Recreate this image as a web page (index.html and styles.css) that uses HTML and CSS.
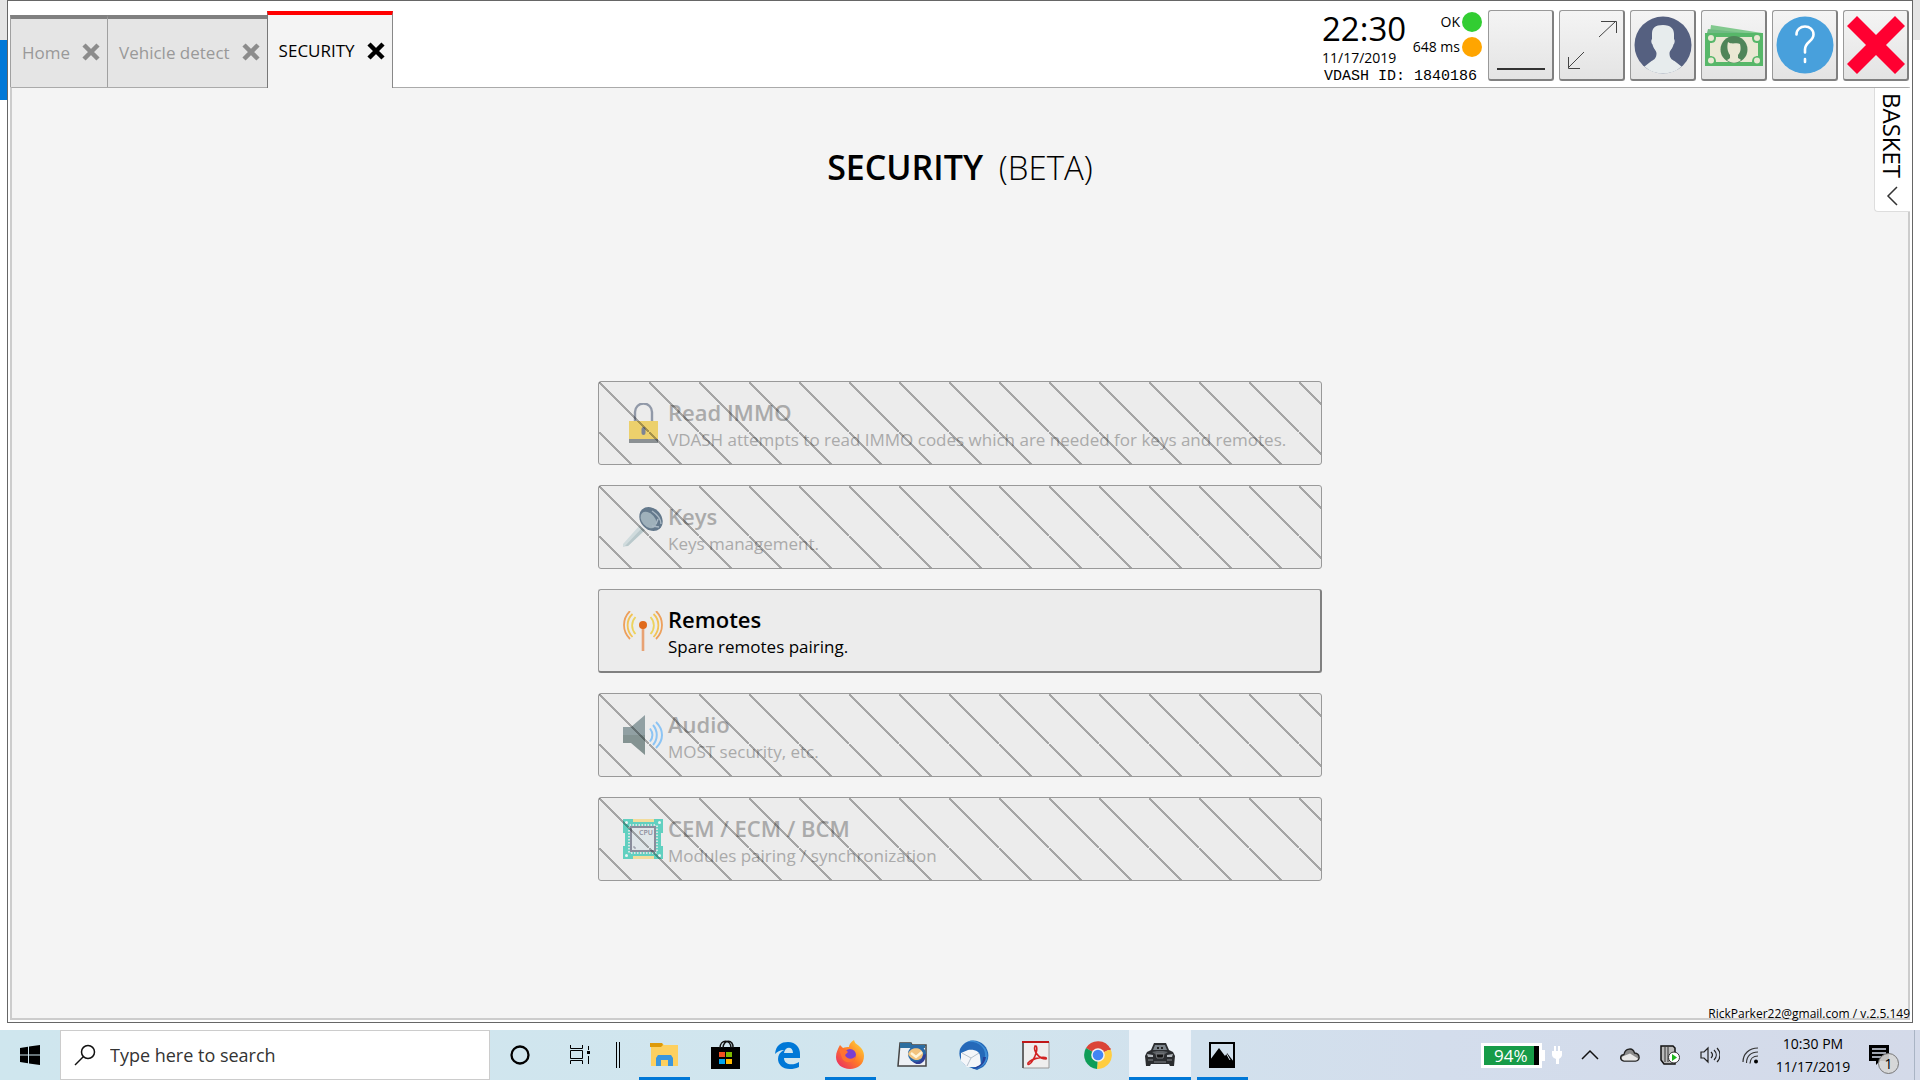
FILE: index.html
```html
<!DOCTYPE html>
<html lang="en">
<head>
<meta charset="utf-8">
<title>VDASH - Security</title>
<link rel="stylesheet" href="styles.css">
</head>
<body>
<div class="desktop">
  <div class="window">
    <header class="header">
      <nav class="tabs">
        <div class="tab"><a href="#home">Home</a><button class="tab-close" aria-label="Close Home"><svg width="18" height="18" viewBox="0 0 18 18"><path d="M2 2L16 16M16 2L2 16" stroke="currentColor" stroke-width="4.5"/></svg></button></div>
        <div class="tab"><a href="#vehicle">Vehicle detect</a><button class="tab-close" aria-label="Close Vehicle detect"><svg width="18" height="18" viewBox="0 0 18 18"><path d="M2 2L16 16M16 2L2 16" stroke="currentColor" stroke-width="4.5"/></svg></button></div>
        <div class="tab tab-active"><a href="#security">SECURITY</a><button class="tab-close" aria-label="Close SECURITY"><svg width="18" height="18" viewBox="0 0 18 18"><path d="M2 2L16 16M16 2L2 16" stroke="currentColor" stroke-width="4.5"/></svg></button></div>
      </nav>
      <div class="info">
        <div class="clock"><div class="clock-time">22:30</div><div class="clock-date">11/17/2019</div></div>
        <div class="status">
          <div class="status-row">OK<span class="dot dot-green"></span></div>
          <div class="status-row">648 ms<span class="dot dot-orange"></span></div>
        </div>
        <div class="vdash-id">VDASH ID: 1840186</div>
      </div>
      <div class="tools">
        <button class="tool" aria-label="Minimize"><svg width="58" height="58" viewBox="0 0 58 58"><path d="M5 53H53" stroke="#333" stroke-width="2"/></svg></button>
        <button class="tool" aria-label="Resize"><svg width="58" height="58" viewBox="0 0 58 58"><g fill="none" stroke="#444" stroke-width="1"><path d="M36 21L53 5M38 5.500H53.500V17M21 36L5 52M5.500 41V52.500H17"/></g></svg></button>
        <button class="tool" aria-label="Profile"><svg width="58" height="58" viewBox="0 0 58 58"><circle cx="29" cy="29" r="28.500" fill="#556080"/><path d="M29 9c8 0 11 4 11 9v5c1 1 1 4-.5 5.500C38.500 33 36 34 35.500 37c0 5 2 6.500 5 8l7 5.500C43 55 36 57.500 29 57.500S15 55 10.500 50.500l7-5.500c3-1.500 5-3 5-8C22 34 19.500 33 18.500 28.500 17 27 17 24 18 23v-5c0-6 3-9 11-9z" fill="#e7eced"/></svg></button>
        <button class="tool" aria-label="Payments"><svg width="58" height="58" viewBox="0 0 58 58"><path d="M6 9L57 17H5z" fill="#82c98e"/><path d="M3 13L40 17H2z" fill="#6fbb82"/><path d="M0 17H58V50H0z" fill="#57b769"/><path d="M11 21H47c0 5 2 6 6 6V40c-4 0-6 2-6 6H11c0-4-2-6-6-6V27c4 0 6-1 6-6z" fill="#eae8d3"/><g fill="#eae8d3"><circle cx="6" cy="22" r="3"/><circle cx="52" cy="22" r="3"/><circle cx="6" cy="44.500" r="3"/><circle cx="52" cy="44.500" r="3"/></g><circle cx="29" cy="33.500" r="13.500" fill="#4f8559"/><path d="M23 26c4 3 9 0 12 2 1 4 1 8-2 11v3c2 1 3 2 3 2-4 3.500-10 3.500-14 0 0 0 2-1 3-2v-3c-3-4-3-9-2-13z" fill="#eae8d3"/></svg></button>
        <button class="tool" aria-label="Help"><svg width="58" height="58" viewBox="0 0 58 58"><circle cx="29" cy="29" r="28.500" fill="#48a0dc"/><path d="M20.500 18.500c0-5 4-8 8.500-8s8.500 3 8.500 8c0 7-8.500 7-8.500 15v3M29 43v3" fill="none" stroke="#fff" stroke-width="2.600" stroke-linecap="round"/></svg></button>
        <button class="tool" aria-label="Exit"><svg width="58" height="58" viewBox="0 0 58 58"><path d="M10 0L29 19L48 0L58 10L39 29L58 48L48 58L29 39L10 58L0 48L19 29L0 10z" fill="#ff0031"/></svg></button>
      </div>
    </header>
    <main class="panel">
      <button class="basket"><span>BASKET</span><svg width="12" height="20" viewBox="0 0 12 20"><path d="M11 1L2 10L11 19" fill="none" stroke="#333" stroke-width="1.500"/></svg></button>
      <h1 class="title">SECURITY <span>(BETA)</span></h1>
      <div class="list">
        <button class="card card-off" disabled>
          <svg width="40" height="40" viewBox="0 0 40 40"><path d="M12 20V9a8 8 0 0 1 17 0V20" fill="none" stroke="#9199a8" stroke-width="2.400"/><path d="M6 18H35V36H6z" fill="#ecd06c"/><path d="M6 36H35V40H6z" fill="#8b9093"/><path d="M20.500 26V30" stroke="#7d8494" stroke-width="4" stroke-linecap="round"/></svg>
          <span class="card-text"><strong>Read IMMO</strong><span>VDASH attempts to read IMMO codes which are needed for keys and remotes.</span></span>
        </button>
        <button class="card card-off" disabled>
          <svg width="40" height="40" viewBox="0 0 40 40"><path d="M0 37L17 18L22 23L5 39L0 40z" fill="#d0dbdd"/><path d="M2 39L19 21L22 23L5 39z" fill="#b9c8cb"/><ellipse cx="28" cy="12" rx="13" ry="10.500" transform="rotate(48 28 12)" fill="#64798c"/><ellipse cx="25.500" cy="13" rx="9.500" ry="6.500" transform="rotate(48 25.500 13)" fill="#9fb1bb"/><path d="M29 4C35 8 38 13 38 17M33 17l2-5M29 19l7 1" stroke="#a9b8c4" fill="none" stroke-width="1.500"/></svg>
          <span class="card-text"><strong>Keys</strong><span>Keys management.</span></span>
        </button>
        <button class="card">
          <svg width="40" height="40" viewBox="0 0 40 40"><path d="M20 14V40" stroke="#e8a273" stroke-width="2.600"/><circle cx="20" cy="14" r="4" fill="#e06a1c"/><g fill="none" stroke-width="1.800"><path d="M7 0C-1 8-1 20 7 28M33 0C41 8 41 20 33 28" stroke="#eda05c"/><path d="M9.500 3C3 9 3 19 9.500 26M30.500 3C37 9 37 19 30.500 26" stroke="#f2c355"/><path d="M12.500 6C8 11 8 18 12.500 23M27.500 6C32 11 32 18 27.500 23" stroke="#ecd35e"/></g></svg>
          <span class="card-text"><strong>Remotes</strong><span>Spare remotes pairing.</span></span>
        </button>
        <button class="card card-off" disabled>
          <svg width="40" height="40" viewBox="0 0 40 40"><path d="M0 12H8L22 0V20H0z" fill="#91a0a3"/><path d="M0 20H22V40L8 28H0z" fill="#849392"/><g fill="none" stroke-width="2"><path d="M27 13.500c3 4 3 9 0 13M30 10c5 6 5 14 0 20M33 7c8 8 8 18 0 26" stroke="#8cc4f4"/></g></svg>
          <span class="card-text"><strong>Audio</strong><span>MOST security, etc.</span></span>
        </button>
        <button class="card card-off" disabled>
          <svg width="40" height="40" viewBox="0 0 40 40"><path d="M0 0H40V14H38V27H40V40H0V27H2V14H0z" fill="#61d0c0"/><path d="M10 0H31V3H10zM10 37H31V40H10z" fill="#f2dc9b"/><rect x="6.500" y="6.500" width="27" height="27" fill="none" stroke="#d5e4e3" stroke-width="3" stroke-dasharray="1.500 1.500"/><rect x="8" y="8" width="24" height="24" fill="#dfe6e9" stroke="#8a8d9c" stroke-width="2"/><g fill="#eef4f3"><circle cx="3.500" cy="3.500" r="1.500"/><circle cx="36.500" cy="3.500" r="1.500"/><circle cx="3.500" cy="36.500" r="1.500"/><circle cx="36.500" cy="36.500" r="1.500"/></g><text x="16" y="16" class="chip-label">CPU</text><path d="M11 27v2h2" stroke="#8a8d9c" fill="none"/></svg>
          <span class="card-text"><strong>CEM / ECM / BCM</strong><span>Modules pairing / synchronization</span></span>
        </button>
      </div>
      <div class="account">RickParker22@gmail.com / v.2.5.149</div>
    </main>
  </div>
</div>
<footer class="taskbar">
  <button class="start" aria-label="Start"><svg width="20" height="20" viewBox="0 0 20 20"><path d="M0 3L8 1.800V9.500H0zM9 1.600L20 0V9.500H9zM0 10.500H8V18.200L0 17zM9 10.500H20V20L9 18.400z"/></svg></button>
  <label class="search"><svg width="22" height="22" viewBox="0 0 22 22"><g fill="none" stroke="#111" stroke-width="1.500"><circle cx="14" cy="8" r="6.500"/><path d="M9.500 12.500L1 21"/></g></svg><input type="text" placeholder="Type here to search" aria-label="Search"></label>
  <button class="sys" aria-label="Cortana"><svg width="20" height="20" viewBox="0 0 20 20"><circle cx="10" cy="10" r="8.500" fill="none" stroke="#000" stroke-width="2.300"/></svg></button>
  <button class="sys" aria-label="Task view"><svg width="20" height="20" viewBox="0 0 20 20"><path d="M.5 0V3.500H12.500V0M.5 19V15.500H12.500V19M.5 5.500H12.500V13.500H.5zM18.500 1V5M18.500 11V19" fill="none" stroke="#000"/><path d="M17 6h3v3h-3z"/></svg></button>
  <span class="grip"></span>
  <div class="apps">
    <button class="app app-open" aria-label="File Explorer"><svg width="30" height="30" viewBox="0 0 30 30"><path d="M2 3H13L15 5H29V26H2z" fill="#fdd05f"/><path d="M1 3H13L14 5L12 7H1z" fill="#dd9a0a"/><path d="M7 26V18L9 15H22L24 18V26H19V20H12V26z" fill="#3a96dd"/></svg></button>
    <button class="app" aria-label="Microsoft Store"><svg width="30" height="30" viewBox="0 0 30 30"><path d="M0 7H29V29H0z"/><path d="M9 8C9-1 20-1 20 8M12 8C12-1 23-1 22 8" fill="none" stroke="#111" stroke-width="1.500"/><path d="M8 12h6v5H8z" fill="#f25022"/><path d="M15 12h6v5h-6z" fill="#7fba00"/><path d="M8 19h6v5H8z" fill="#00a4ef"/><path d="M15 19h6v5h-6z" fill="#ffb900"/></svg></button>
    <button class="app" aria-label="Edge"><svg width="30" height="30" viewBox="0 0 30 30"><path d="M2 14C3 5 8 2 15 2c8 0 12 6 12 12v4H11c0 7 9 8 15 4v5c-3 1.500-6 2-9 2C9 29 5 24 5 19c0-4 2-7 6-9-4 0-7 2-9 4zM11 13h9c0-7-8-7-9 0z" fill="#0078d7" fill-rule="evenodd"/></svg></button>
    <button class="app app-open" aria-label="Firefox"><svg width="30" height="30" viewBox="0 0 30 30"><defs><linearGradient id="fx" x1="1" y1="0" x2="0" y2="1"><stop offset="0" stop-color="#ffe53b"/><stop offset=".5" stop-color="#ff7a27"/><stop offset="1" stop-color="#e6216e"/></linearGradient></defs><path d="M5 5l3 3c2-1 4-1 6-1 0-3 2-5 5-7 1 4 3 4 5 6 4 3 5 7 5 10 0 8-6 13-14 13S1 24 1 17C1 12 3 9 5 5z" fill="url(#fx)"/><circle cx="15" cy="15" r="6" fill="#7a3fd0"/><path d="M4 9c4-1 7 0 9 3l-3 3c2 5 9 5 11 0-1 9-12 9-14 3z" fill="#ff7230"/></svg></button>
    <button class="app" aria-label="Mail profile"><svg width="30" height="30" viewBox="0 0 30 30"><path d="M3 3H14L15 5H29V26H1z" fill="#eef1f5" stroke="#444" stroke-width="1.500"/><path d="M3 3H14L15 5H28V8H3z" fill="#2d6f9f"/><circle cx="20" cy="14" r="9" fill="#2a6aa8"/><path d="M11 14c3-8 14-7 15 0 0 7-10 9-15 0z" fill="#f2c37e"/><path d="M14 13l5 4 6-5" fill="none" stroke="#fff5d9" stroke-width="2.500"/><path d="M29 14c0 10-9 13-14 7 6 2 10 0 11-6z" fill="#2f3f96"/></svg></button>
    <button class="app" aria-label="Thunderbird"><svg width="30" height="30" viewBox="0 0 30 30"><path d="M1 9C6-1 18-2 25 5c6 6 6 16-1 22l-6 3-8-3C2 24-1 16 1 9z" fill="#2569b9"/><path d="M8 2c10-2 19 5 18 14-1 6-5 10-9 12 11-1 15-13 8-21C19 0 12-1 8 2z" fill="#3f8ed6"/><path d="M2 13L9 10c7-1 12 2 12 6l1 9-5 2-9 0-6-6z" fill="#f4f6f9"/><path d="M3 13l9 5 8-5M8 26l4-8" fill="none" stroke="#b4bfca"/><path d="M27 17c-1 8-8 12-14 12l6-3c4-2 5-5 5-9z" fill="#27439b"/></svg></button>
    <button class="app" aria-label="Acrobat Reader"><svg width="30" height="30" viewBox="0 0 30 30"><path d="M2 2H28V28H2z" fill="#eee" stroke="#999"/><path d="M1 3V28H3V3z" fill="#666"/><path d="M1 1H28V3H1z" fill="#c01818"/><path d="M14 6c-2 5 4 13 11 13 3-3-13-2-18 4-1 3 3 1 5-3 3-5 5-12 3-14z" fill="none" stroke="#d22323" stroke-width="1.600"/></svg></button>
    <button class="app" aria-label="Chrome"><svg width="30" height="30" viewBox="0 0 30 30"><path d="M15 15L3 8A14 14 0 0 1 27.500 9z" fill="#db4437"/><path d="M15 15L27.500 9A14 14 0 0 1 14 29z" fill="#ffcd40"/><path d="M15 15L14 29A14 14 0 0 1 3 8z" fill="#0f9d58"/><path d="M15 8H27.500V10H15z" fill="#db4437"/><circle cx="15" cy="15" r="6.800" fill="#f1f1f1"/><circle cx="15" cy="15" r="5.300" fill="#4285f4"/></svg></button>
    <button class="app app-current" aria-label="VDASH"><svg width="30" height="30" viewBox="0 0 30 30"><path d="M9 3H21L24 10L28 12L30 16L29 26H25L24 24H6L5 26H1L0 16L2 12L6 10z" fill="#2b2d30"/><path d="M10 5H20L22 10H8z" fill="#7b838b"/><path d="M12 7h2v2h-2zM16 7h2v2h-2z" fill="#222"/><path d="M7 12L12 11H18L23 12L20 14H10z" fill="#5d6165"/><path d="M11 14H19L18 18H12z" fill="#111" stroke="#8c8e92" stroke-width=".8"/><path d="M2 14L8 15V17H3zM28 14L22 15V17H27z" fill="#b4b9be"/><path d="M3 20H8M22 20H27M9 22H21" stroke="#85888c"/></svg></button>
    <button class="app app-open" aria-label="Photos"><svg width="30" height="30" viewBox="0 0 30 30"><path d="M3 3H27V27H3z" fill="none" stroke="#000" stroke-width="2"/><path d="M3 20L12 8L18 16L20 13L27 22V28H3z"/><path d="M19 13l4 7" stroke="#d3dfe9"/></svg></button>
  </div>
  <div class="tray">
    <span class="battery">94%</span>
    <svg class="plug" width="10" height="18" viewBox="0 0 10 18"><path d="M2 0h2v5h2V0h2v5h2v4c0 2-2 3-3 4v5H4v-5C2 12 0 11 0 9V5h2z" fill="#fff"/></svg>
    <svg width="20" height="20" viewBox="0 0 20 20"><path d="M2 14L10 6L18 14" fill="none" stroke="#111" stroke-width="1.500"/></svg>
    <svg width="20" height="20" viewBox="0 0 20 20"><path d="M4 16c-5-1-4-6 0-6.500C5 3 13 2 14.500 8c6 .5 6 8 1 8z" fill="#8c8c8c" stroke="#222" stroke-width="1.300"/><path d="M4 15.500c-3-1-3-4 1-5l5-2 8 5c-1 2-2 2-4 2z" fill="#e8e8e8"/></svg>
    <svg width="20" height="20" viewBox="0 0 20 20"><path d="M1 1H13L15 3V19H4L1 15z" fill="#bbb" stroke="#111" stroke-width="1.500"/><path d="M5 2V17M8 2V17" stroke="#333"/><circle cx="14" cy="12.500" r="5.500" fill="#fff" stroke="#333"/><path d="M12 9l5 3.500-5 3.500z" fill="#1cb51c"/></svg>
    <svg width="20" height="20" viewBox="0 0 20 20"><path d="M1 7H4L8 3V17L4 13H1zM11 7c2 2 2 4 0 6M14 5c3 3 3 7 0 10M17 3c4 4 4 10 0 14" fill="none" stroke="#222" stroke-width="1.200"/></svg>
    <svg width="20" height="20" viewBox="0 0 20 20"><g fill="none" stroke="#333" stroke-width="1.200"><path d="M3 17C3 9 9 3 18 3M6.500 18C6.500 11 11 7 18 7M10 18.500C10 14 13 11 18 11"/></g><circle cx="16" cy="16.500" r="2"/></svg>
    <div class="tray-clock"><span>10:30 PM</span><span>11/17/2019</span></div>
    <div class="notice"><svg width="20" height="20" viewBox="0 0 20 20"><path d="M0 0H20V16H11L7 20V16H0z"/><path d="M3 4H17M3 8H17M3 12H12" stroke="#d4dcea" stroke-width="1.300"/></svg><span class="badge">1</span></div>
  </div>
</footer>
</body>
</html>
```
FILE: styles.css
```css
* { box-sizing: border-box; }

body {
  margin: 0;
  min-height: 100vh;
  display: flex;
  flex-direction: column;
  background: #fff;
  color: #000;
  font-family: "Open Sans", "Noto Sans", sans-serif;
  font-size: 17px;
}

button {
  margin: 0;
  padding: 0;
  border: 0;
  background: none;
  color: inherit;
  font: inherit;
}

svg { display: block; flex: none; }

/* Desktop area and the application window */
.desktop {
  flex: 1;
  display: flex;
  padding: 0 7px 7px;
  background:
    linear-gradient(#e5e5e5 40px, #0078d7 40px 100px, #fff 100px) left / 7px 100% no-repeat,
    linear-gradient(#e5e5e5 40px, #fff 40px) right / 7px 100% no-repeat;
}

.window {
  flex: 1;
  display: flex;
  flex-direction: column;
  padding: 0 2px 2px;
  border: 1px solid #666;
  background: #fff;
}

.header {
  display: flex;
  align-items: flex-end;
  height: 86px;
}

.tabs {
  flex: 1;
  display: flex;
  align-items: flex-end;
}

.tab {
  display: flex;
  align-items: center;
  gap: 12px;
  height: 72px;
  padding: 0 7px 2px 11px;
  border-top: 4px solid #808080;
  border-left: 1px solid #a0a0a0;
  background: #e5e5e5;
  color: #999;
}

.tab a { color: inherit; text-decoration: none; }

.tab-close { color: #8c8c8c; }

.tab-active {
  height: 77px;
  margin-bottom: -1px;
  border-top-color: #f00;
  border-left-color: #777;
  border-right: 1px solid #888;
  background: #f4f4f4;
  color: #000;
  z-index: 1;
}

.tab-active .tab-close { color: #000; }

.info {
  display: grid;
  grid-template-columns: auto 1fr;
  width: 160px;
  height: 78px;
  margin-right: 6px;
  font-size: 14px;
}

.clock-time {
  font-size: 33px;
  line-height: 40px;
}

.clock-date { line-height: 17px; }

.status-row {
  display: flex;
  align-items: center;
  justify-content: flex-end;
  gap: 2px;
  height: 25px;
}

.dot {
  width: 20px;
  height: 20px;
  border-radius: 50%;
}

.dot-green { background: #32cd32; }
.dot-orange { background: #ffa500; }

.vdash-id {
  grid-column: 1 / -1;
  padding-left: 2px;
  font-family: "Liberation Mono", monospace;
  font-size: 15px;
  line-height: 20px;
}

.tools {
  display: flex;
  gap: 5px;
  padding: 0 1px 6px 0;
}

.tool {
  display: flex;
  align-items: center;
  justify-content: center;
  width: 66px;
  height: 71px;
  border: 1px solid #999;
  border-right: 2px solid #808080;
  border-bottom: 2px solid #808080;
  border-radius: 3px;
  background: linear-gradient(#f4f4f4, #e4e4e4);
}

/* Page content */
.panel {
  position: relative;
  flex: 1;
  display: flex;
  flex-direction: column;
  align-items: center;
  border: 2px solid #ccc;
  border-top: 1px solid #aaa;
  background: #f4f4f4;
}

.basket {
  position: absolute;
  top: 0;
  right: -2px;
  display: flex;
  align-items: center;
  gap: 8px;
  padding: 5px 5px 5px 4px;
  border: 1px solid #ddd;
  border-top: 0;
  border-right: 0;
  border-radius: 0 0 0 4px;
  background: #fff;
  font-size: 24px;
  line-height: 26px;
  writing-mode: vertical-rl;
}

.title {
  margin: 0;
  padding: 57px 0 54px;
  font-size: 34px;
  font-weight: 600;
  line-height: 44px;
}

.title span {
  margin-left: 7px;
  font-size: 33px;
  font-weight: 300;
}

.list {
  flex: 1;
  display: flex;
  flex-direction: column;
  justify-content: center;
  gap: 20px;
  width: 724px;
  max-width: 100%;
}

.card {
  position: relative;
  display: flex;
  align-items: center;
  gap: 5px;
  height: 84px;
  padding: 0 24px;
  border: 1px solid #999;
  border-right: 2px solid #808080;
  border-bottom: 2px solid #808080;
  border-radius: 3px;
  background: #ececec;
  text-align: left;
}

.card-text {
  display: flex;
  flex-direction: column;
  padding-top: 5px;
  line-height: 27px;
  white-space: nowrap;
}

.card-text strong {
  font-size: 22px;
  font-weight: 600;
}

.card-off {
  border: 1px solid #999;
  color: #aaa;
}

.card-off::after {
  content: "";
  position: absolute;
  inset: 0;
  background: linear-gradient(45deg, transparent calc(50% - 1px), rgba(0, 0, 0, .3) calc(50% - 1px) calc(50% + 1px), transparent calc(50% + 1px)) 0 0 / 50px 50px;
}

.chip-label {
  fill: #8a8d9c;
  font-size: 7px;
  font-weight: 600;
}

.account {
  position: absolute;
  right: -2px;
  bottom: -4px;
  font-size: 12px;
  line-height: 16px;
}

/* Taskbar */
.taskbar {
  display: flex;
  align-items: stretch;
  height: 50px;
  background: linear-gradient(90deg, #cfe6ee, #d1e5ee 50%, #d3ddec 75%, #d4dae9);
}

.start,
.sys {
  display: flex;
  align-items: center;
  justify-content: center;
  width: 60px;
}

.search {
  display: flex;
  align-items: center;
  gap: 14px;
  width: 430px;
  padding: 0 13px;
  border: 1px solid #ccc;
  background: #fff;
}

.search input {
  flex: 1;
  min-width: 0;
  padding: 0;
  border: 0;
  outline: 0;
  background: none;
  font: inherit;
  font-size: 18px;
}

.search input::placeholder { color: #333; opacity: 1; }

.grip {
  align-self: center;
  width: 4px;
  height: 26px;
  margin: 0 13px 0 6px;
  border: 1px solid #000;
  border-width: 0 1px;
}

.apps {
  flex: 1;
  display: flex;
}

.app {
  display: flex;
  align-items: center;
  justify-content: center;
  width: 62px;
}

.app-open {
  background: linear-gradient(#0078d7, #0078d7) center bottom / 51px 3px no-repeat;
}

.app-current {
  border-bottom: 3px solid #0078d7;
  padding-top: 3px;
  background: #eef3f9;
}

.tray {
  display: flex;
  align-items: center;
  gap: 20px;
  margin-right: 5px;
  padding-right: 15px;
  border-right: 1px solid #a9b4c4;
}

.battery {
  position: relative;
  width: 61px;
  height: 25px;
  padding-left: 10px;
  border: 3px solid #fff;
  background: linear-gradient(90deg, #169b48 50px, #000 50px);
  color: #fff;
  font-size: 17px;
  line-height: 19px;
}

.battery::after {
  content: "";
  position: absolute;
  top: 4px;
  right: -6px;
  width: 3px;
  height: 11px;
  background: #fff;
}

.plug { margin: 0 -2px 0 -10px; }

.tray-clock {
  display: flex;
  flex-direction: column;
  align-items: center;
  width: 76px;
  margin: 0 -2px 0 -5px;
  font-size: 14px;
  line-height: 23px;
}

.notice {
  position: relative;
  width: 30px;
}

.badge {
  position: absolute;
  top: 8px;
  left: 9px;
  width: 21px;
  height: 21px;
  border: 1px solid #777;
  border-radius: 50%;
  background: rgba(214, 214, 214, .9);
  font-size: 14px;
  line-height: 19px;
  text-align: center;
}
```
